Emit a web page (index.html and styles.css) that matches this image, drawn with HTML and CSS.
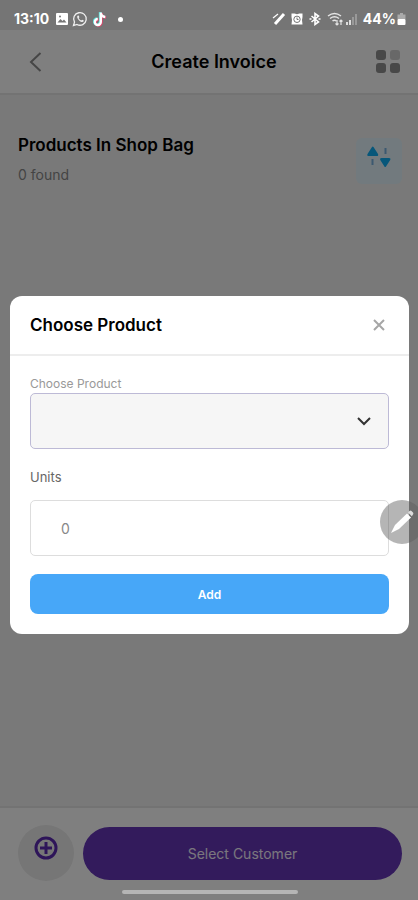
FILE: index.html
```html
<!DOCTYPE html>
<html lang="en">
<head>
    <meta charset="UTF-8">
    <meta name="viewport" content="width=device-width, initial-scale=1.0">
    <title>Create Invoice</title>
    <link rel="stylesheet" href="styles.css">
</head>
<body>
    <div class="status-bar">
        <div class="status-left">
            <span class="status-time">13:10</span>
            <svg width="14" height="14" viewBox="0 0 14 14">
                <rect x="1" y="1" width="12" height="12" rx="1" fill="#fff"/>
                <path d="M2.5 10.500l3-3.500 2 2 1.500-1.500 2.500 3z" fill="#757575"/>
                <circle cx="5" cy="4.500" r="1" fill="#757575"/>
            </svg>
            <svg width="16" height="16" viewBox="0 0 16 16" fill="none" stroke="#eee" stroke-width="1.300">
                <path d="M1.500 14.500l1-3.400a6.300 6.300 0 1 1 2.500 2.400z"/>
                <path d="M5.500 4.800c-1 1.200.2 3.200 1.700 4.600s3.300 2.200 4.300 1.200l.3-1-1.700-.9-.9.9c-1.200-.5-2-1.300-2.600-2.500l.8-.8-.7-1.700z" fill="#eee" stroke="none"/>
            </svg>
            <svg class="tiktok" width="14" height="16" viewBox="0 0 14 16" fill="none" stroke-width="2.400">
                <path d="M7 1v9.500a3 3 0 1 1-3-3M7 1.500c.3 2.500 2 3.800 4.500 4" stroke="#4fd8d2"/>
                <path d="M8.600 2v9.500a3 3 0 1 1-3-3M8.600 2.500c.3 2.500 2 3.800 4.500 4" stroke="#e0446c"/>
                <path d="M7.800 1.500v9.500a3 3 0 1 1-3-3M7.800 2c.3 2.500 2 3.800 4.500 4" stroke="#fff"/>
            </svg>
            <span class="status-dot"></span>
        </div>
        <div class="status-right">
            <svg width="14" height="14" viewBox="0 0 14 14" fill="none" stroke="#fff">
                <path d="M3 12l9-10" stroke-width="3"/>
                <path d="M1 6l5-4" stroke-width="1.300"/>
            </svg>
            <svg width="12" height="14" viewBox="0 0 12 14">
                <path d="M.5 1.500h3L6 2.300l2.500-.8h3v3.500L11 8l.5 4.500h-11L1 8 .5 5z" fill="#fff"/>
                <circle cx="6" cy="7.300" r="3.200" fill="none" stroke="#757575"/>
                <path d="M6 5.500v2h1.500" fill="none" stroke="#757575"/>
            </svg>
            <svg class="bluetooth" width="12" height="14" viewBox="0 0 12 14" fill="none" stroke="#fff" stroke-width="1.600">
                <path d="M2.500 4l7 6L6 12.500v-11L9.500 4l-7 6"/>
                <path d="M.5 7h2M9.500 7h2"/>
            </svg>
            <svg class="wifi" width="17" height="14" viewBox="0 0 17 14" fill="none" stroke="#e4e4e4" stroke-width="1.500">
                <path d="M1 4c4-3 9-3 13 0M3 6.500c3-2.200 6-2.200 9 0M5.500 9c1.300-1 2.700-1 4 0"/>
                <path d="M10 8v5M8.500 11.500L10 13l1.500-1.500M14 13V8M12.500 9.500L14 8l1.500 1.500" stroke-width="1.200"/>
            </svg>
            <svg width="13" height="14" viewBox="0 0 13 14">
                <path d="M1 10h2v3H1zM4 8h2v5H4z" fill="#ddd"/>
                <path d="M7 5h2v8H7zM10 2h2v11h-2z" fill="#999"/>
            </svg>
            <span class="status-percent">44%</span>
            <svg width="9" height="14" viewBox="0 0 9 14">
                <path d="M3 1h3v1.500h2.500V7h-8V2.500H3z" fill="#aaa"/>
                <rect x=".5" y="7" width="8" height="6" rx="1" fill="#fff"/>
            </svg>
        </div>
    </div>

    <header class="header">
        <button type="button" class="icon-button" aria-label="Back">
            <svg width="32" height="24" viewBox="0 0 32 24" fill="none" stroke="#8c8c8c" stroke-width="2">
                <path d="M20.500 3L11 12l9.500 9"/>
            </svg>
        </button>
        <h1>Create Invoice</h1>
        <button type="button" class="icon-button" aria-label="Menu">
            <svg width="24" height="24" viewBox="0 0 24 24" fill="#909090">
                <rect width="10" height="10" rx="3"/>
                <rect x="14" width="10" height="10" rx="3" fill="#d0d0d0"/>
                <rect y="13" width="10" height="10" rx="3"/>
                <rect x="14" y="13" width="10" height="10" rx="3"/>
            </svg>
        </button>
    </header>

    <main class="content">
        <div>
            <h2>Products In Shop Bag</h2>
            <p>0 found</p>
        </div>
        <button type="button" class="sort-button" aria-label="Sort">
            <svg width="26" height="24" viewBox="0 0 26 24">
                <path d="M7.500 2L12 9q.8 2-1.200 2H2.700Q.7 11 1.500 9L6 2q.7-1 1.500 0zM15.500 13h7.500q2 0 1.200 2L20 21.500q-.8 1-1.600 0L14.300 15q-.8-2 1.200-2z" fill="#0eaef5"/>
                <path d="M6.500 14v6M19.500 3v6" stroke="#78b2e0" stroke-width="2"/>
            </svg>
        </button>
    </main>

    <footer class="footer">
        <button type="button" class="add-customer" aria-label="Add customer">
            <svg width="24" height="24" viewBox="0 0 24 24" fill="none" stroke="#5c2bb3" stroke-width="3">
                <circle cx="12" cy="12" r="10"/>
                <path d="M12 6v12M6 12h12"/>
            </svg>
        </button>
        <button type="button" class="select-customer">Select Customer</button>
    </footer>

    <div class="overlay">
        <form class="modal" role="dialog" aria-labelledby="modal-title">
            <div class="modal-header">
                <h3 id="modal-title">Choose Product</h3>
                <button type="button" class="icon-button" aria-label="Close">
                    <svg width="20" height="20" viewBox="0 0 20 20" fill="none" stroke="#a6a6a6" stroke-width="2">
                        <path d="M5 5l10 10M15 5L5 15"/>
                    </svg>
                </button>
            </div>
            <div class="modal-body">
                <label class="product-label" for="product">Choose Product</label>
                <div class="select-box">
                    <select id="product" name="product">
                        <option value=""></option>
                    </select>
                    <svg class="select-arrow" width="14" height="10" viewBox="0 0 14 10" fill="none" stroke="#333" stroke-width="2">
                        <path d="M1 2l6 6 6-6"/>
                    </svg>
                </div>
                <label class="units-label" for="units">Units</label>
                <input type="text" inputmode="numeric" id="units" name="units" placeholder="0">
                <button type="submit" class="add-button">Add</button>
            </div>
        </form>
    </div>

    <button type="button" class="pen-button" aria-label="Edit">
        <svg width="24" height="24" viewBox="0 0 24 24">
            <path d="M1 23l4-8L17 3.500l4 4L9 19z" fill="#fff"/>
            <path d="M18 2.500L19.500 1q1-.8 2 0L23 2.500q.8 1 0 2L21.800 6.200z" fill="#ddd"/>
        </svg>
    </button>
    <div class="home-indicator"></div>
</body>
</html>
```

FILE: styles.css
```css
* {
    box-sizing: border-box;
}
body {
    font-family: Inter, "Liberation Sans", sans-serif;
    margin: 0;
    min-height: 100vh;
    display: flex;
    flex-direction: column;
    overflow: hidden;
    background-color: #f3f3f3;
}
h1, h2, h3, p {
    margin: 0;
}
button {
    font-family: inherit;
    border: none;
    padding: 0;
    cursor: pointer;
}
svg {
    display: block;
}
.icon-button {
    background: none;
}
.status-bar {
    height: 30px;
    padding: 8px 12px 0 14px;
    display: flex;
    justify-content: space-between;
    background-color: #757575;
    color: white;
    font-size: 14px;
    font-weight: 700;
    line-height: 20px;
}
.status-left, .status-right {
    display: flex;
    align-items: center;
    gap: 3px;
}
.status-time {
    margin-right: 3px;
}
.tiktok {
    margin-left: 2px;
}
.status-dot {
    width: 5px;
    height: 5px;
    margin-left: 8px;
    border-radius: 50%;
    background-color: white;
}
.status-right {
    gap: 1px;
}
.bluetooth {
    margin: 0 5px;
}
.status-right svg:first-child {
    margin-right: 4px;
}
.status-percent {
    margin-left: 4px;
}
.header {
    height: 65px;
    padding: 0 18px 0 20px;
    display: flex;
    align-items: center;
    justify-content: space-between;
    background-color: white;
    border-bottom: 2px solid #e6e6e6;
}
.header h1 {
    font-size: 18px;
    font-weight: 600;
    line-height: 24px;
}
.content {
    flex: 1;
    padding: 38px 16px 0 18px;
    display: flex;
    align-items: flex-start;
    justify-content: space-between;
}
.content h2 {
    font-size: 17px;
    font-weight: 600;
    line-height: 24px;
}
.content p {
    margin-top: 8px;
    color: #888;
    font-size: 14px;
    line-height: 20px;
}
.sort-button {
    width: 46px;
    height: 46px;
    margin-top: 5px;
    padding: 0 0 8px;
    display: flex;
    align-items: center;
    justify-content: center;
    border-radius: 6px;
    background-color: #e4f5fc;
}
.footer {
    padding: 17px 16px 19px 18px;
    display: flex;
    align-items: center;
    gap: 9px;
    background-color: white;
    border-top: 2px solid #e6e6e6;
}
.add-customer {
    width: 56px;
    height: 56px;
    padding-bottom: 10px;
    display: flex;
    align-items: center;
    justify-content: center;
    border-radius: 50%;
    background-color: #ececec;
}
.select-customer {
    flex: 1;
    height: 53px;
    border-radius: 27px;
    background-color: #6636b8;
    color: #f4eefc;
    font-size: 14px;
}
.overlay {
    position: fixed;
    inset: 30px 0 0;
    padding: 0 9px 0 10px;
    display: flex;
    align-items: center;
    background-color: rgba(0, 0, 0, 0.5);
}
.modal {
    flex: 1;
    border-radius: 12px;
    background-color: white;
}
.modal-header {
    height: 60px;
    padding: 0 20px;
    display: flex;
    align-items: center;
    justify-content: space-between;
    border-bottom: 2px solid #ededed;
}
.modal-header h3 {
    font-size: 17px;
    font-weight: 600;
}
.modal-body {
    padding: 20px;
    display: flex;
    flex-direction: column;
}
.product-label {
    color: #999;
    font-size: 12px;
    line-height: 16px;
}
.select-box {
    position: relative;
    margin-top: 1px;
}
select, input {
    display: block;
    width: 100%;
    height: 56px;
    padding: 0 30px;
    border: 1px solid #ddd;
    border-radius: 5px;
    background-color: white;
    font-family: inherit;
    font-size: 14px;
}
select {
    appearance: none;
    border-color: #bdbad6;
    background-color: #f6f6f6;
}
input::placeholder {
    color: #888;
}
.select-arrow {
    position: absolute;
    top: 23px;
    right: 18px;
    pointer-events: none;
}
.units-label {
    margin: 18px 0 13px;
    color: #666;
    font-size: 13px;
    line-height: 20px;
}
.add-button {
    height: 40px;
    margin-top: 18px;
    border-radius: 8px;
    background-color: #47a7f8;
    color: white;
    font-size: 12px;
    font-weight: 600;
}
.pen-button {
    position: fixed;
    top: 500px;
    right: -6px;
    width: 44px;
    height: 44px;
    display: flex;
    align-items: center;
    justify-content: center;
    border-radius: 50%;
    background-color: rgba(90, 90, 90, 0.45);
}
.home-indicator {
    position: fixed;
    bottom: 6px;
    left: 50%;
    width: 176px;
    height: 4px;
    margin-left: -87px;
    border-radius: 2px;
    background-color: #b5b5b5;
}
```
